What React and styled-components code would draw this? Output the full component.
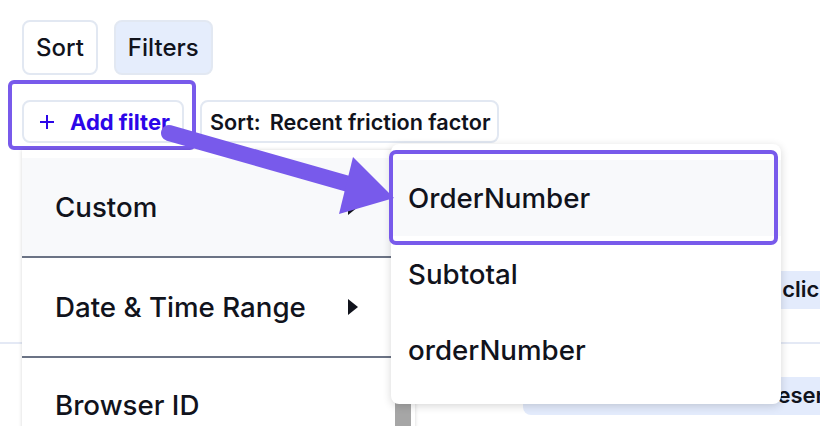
import React from "react";
import styled, { createGlobalStyle } from "styled-components";

const GlobalStyle = createGlobalStyle`
  html, body {
    margin: 0;
    padding: 0;
    background: #fff;
  }
  body {
    font-family: Inter, "Noto Sans", sans-serif;
    color: #11131c;
  }
`;

const Page = styled.div`
  position: relative;
  width: 820px;
  height: 426px;
  overflow: hidden;
  background: #fff;
`;

// Toolbar
const TabRow = styled.div`
  display: flex;
  gap: 16px;
  padding: 20px 0 0 22px;
`;

const TabButton = styled.button`
  box-sizing: border-box;
  height: 55px;
  padding: 0 12px;
  border: 2px solid #e2e8f2;
  border-radius: 8px;
  background: ${(p) => (p.$active ? "#e5edfc" : "#fff")};
  font-family: inherit;
  font-size: 24px;
  font-weight: 500;
  color: #11131c;
`;

const FilterRow = styled.div`
  display: flex;
  gap: 16px;
  padding: 25px 0 0 22px;
`;

const AddFilterWrap = styled.div`
  position: relative;
  z-index: 2;
`;

const AddFilterButton = styled.button`
  box-sizing: border-box;
  display: flex;
  align-items: center;
  gap: 16px;
  height: 43px;
  width: 162px;
  padding: 0 0 0 16px;
  border: 2px solid #e2e8f2;
  border-radius: 8px;
  background: #fff;
  font-family: inherit;
  font-size: 22px;
  font-weight: 700;
  color: #2c06e8;
`;

const Callout = styled.div`
  position: absolute;
  top: -20px;
  left: -14px;
  right: -12px;
  bottom: -7px;
  border: 4px solid #785aeb;
  border-radius: 6px;
  pointer-events: none;
`;

const SortChip = styled.div`
  display: flex;
  align-items: center;
  gap: 9px;
  height: 43px;
  padding: 0 7px 0 8px;
  box-sizing: border-box;
  border: 2px solid #e2e8f2;
  border-radius: 8px;
  font-size: 21.6px;
  font-weight: 600;
`;

// Dropdown menu
const Menu = styled.div`
  position: absolute;
  top: calc(100% + 7px);
  left: 0;
  width: 393px;
  height: 300px;
  display: flex;
  background: #fff;
  box-shadow: 0 0 4px rgba(0, 0, 0, 0.16);
`;

const MenuList = styled.div`
  flex: 1;
  padding-top: 8px;
`;

const MenuRow = styled.div`
  display: flex;
  align-items: center;
  justify-content: space-between;
  height: ${(p) => p.$h || 98}px;
  padding: 0 35px 0 33px;
  background: ${(p) => (p.$hover ? "#f8f9fb" : "#fff")};
  border-top: ${(p) => (p.$divider ? "2px solid #6b7385" : "none")};
  font-size: 27.7px;
  font-weight: 500;
`;

const Caret = styled.span`
  width: 0;
  height: 0;
  border-top: 8px solid transparent;
  border-bottom: 8px solid transparent;
  border-left: 10px solid #11131c;
`;

const ScrollTrack = styled.div`
  width: 22px;
  padding: 0 4px 0 2px;
  box-sizing: border-box;
`;

const ScrollThumb = styled.div`
  margin-top: 240px;
  height: 200px;
  background: #a6a6a6;
`;

const SubMenu = styled.div`
  position: absolute;
  top: -6px;
  left: 369px;
  width: 390px;
  height: 260px;
  box-sizing: border-box;
  padding-top: 16px;
  background: #fff;
  border-radius: 8px;
  box-shadow: 0 2px 8px rgba(0, 0, 0, 0.16);
`;

const SubItem = styled.div`
  position: relative;
  display: flex;
  align-items: center;
  height: 76px;
  padding-left: 17px;
  background: ${(p) => (p.$hover ? "#f8f9fb" : "transparent")};
  font-size: 27.7px;
  font-weight: 500;

  ${(p) =>
    p.$marked &&
    `
    z-index: 1;
    &::after {
      content: "";
      position: absolute;
      top: -10px;
      bottom: -9px;
      left: -2px;
      right: 3px;
      border: 4px solid #785aeb;
      border-radius: 7px;
    }
  `}
`;

// Table behind the menus
const Table = styled.div`
  margin-top: 7px;
`;

const TableRow = styled.div`
  display: grid;
  grid-template-columns: 523px 164px 1fr;
  align-items: ${(p) => (p.$top ? "start" : "end")};
  height: ${(p) => p.$h}px;
  box-sizing: border-box;
  padding: ${(p) => (p.$top ? "33px 0 0" : "0 0 33px")};
  border-bottom: ${(p) => (p.$line ? "2px solid #e4e9f5" : "none")};
`;

const Tag = styled.span`
  grid-column: ${(p) => p.$col};
  justify-self: start;
  margin-left: ${(p) => p.$offset || 0}px;
  display: flex;
  align-items: center;
  box-sizing: border-box;
  height: 38px;
  padding: 0 16px 2px;
  white-space: nowrap;
  background: #e3ebfc;
  border-radius: 8px;
  font-size: 22px;
  font-weight: 600;
`;

const ArrowLayer = styled.svg`
  position: absolute;
  inset: 0;
  pointer-events: none;
  z-index: 5;
`;

const PlusIcon = () => (
  <svg width="14" height="14" viewBox="0 0 14 14">
    <path d="M7 0v14M0 7h14" stroke="currentColor" strokeWidth="2" />
  </svg>
);

const App = () => {
  const customFields = ["OrderNumber", "Subtotal", "orderNumber"];

  return (
    <Page>
      <GlobalStyle />
      <TabRow>
        <TabButton>Sort</TabButton>
        <TabButton $active>Filters</TabButton>
      </TabRow>

      <FilterRow>
        <AddFilterWrap>
          <AddFilterButton>
            <PlusIcon />
            Add filter
          </AddFilterButton>
          <Callout />
          <Menu>
            <MenuList>
              <MenuRow $hover>
                Custom
                <Caret />
              </MenuRow>
              <MenuRow $divider>
                Date &amp; Time Range
                <Caret />
              </MenuRow>
              <MenuRow $divider $h={94}>
                Browser ID
              </MenuRow>
            </MenuList>
            <ScrollTrack>
              <ScrollThumb />
            </ScrollTrack>
            <SubMenu>
              {customFields.map((field, i) => (
                <SubItem key={field} $hover={i === 0} $marked={i === 0}>
                  {field}
                </SubItem>
              ))}
            </SubMenu>
          </Menu>
        </AddFilterWrap>
        <SortChip>
          <span>Sort:</span>
          <span>Recent friction factor</span>
        </SortChip>
      </FilterRow>

      <Table>
        <TableRow $h={194} $line>
          <Tag $col={3} $offset={20}>
            Rage clicks
          </Tag>
        </TableRow>
        <TableRow $h={82} $top>
          <Tag $col={2}>Checkout total</Tag>
          <Tag $col={3}>Order reserved</Tag>
        </TableRow>
      </Table>

      <ArrowLayer width="820" height="426" viewBox="0 0 820 426">
        <line
          x1="169"
          y1="133"
          x2="352"
          y2="185"
          stroke="#785aeb"
          strokeWidth="16"
          strokeLinecap="round"
        />
        <polygon points="353,157 394,198 339,214" fill="#785aeb" />
      </ArrowLayer>
    </Page>
  );
};

export default App;
